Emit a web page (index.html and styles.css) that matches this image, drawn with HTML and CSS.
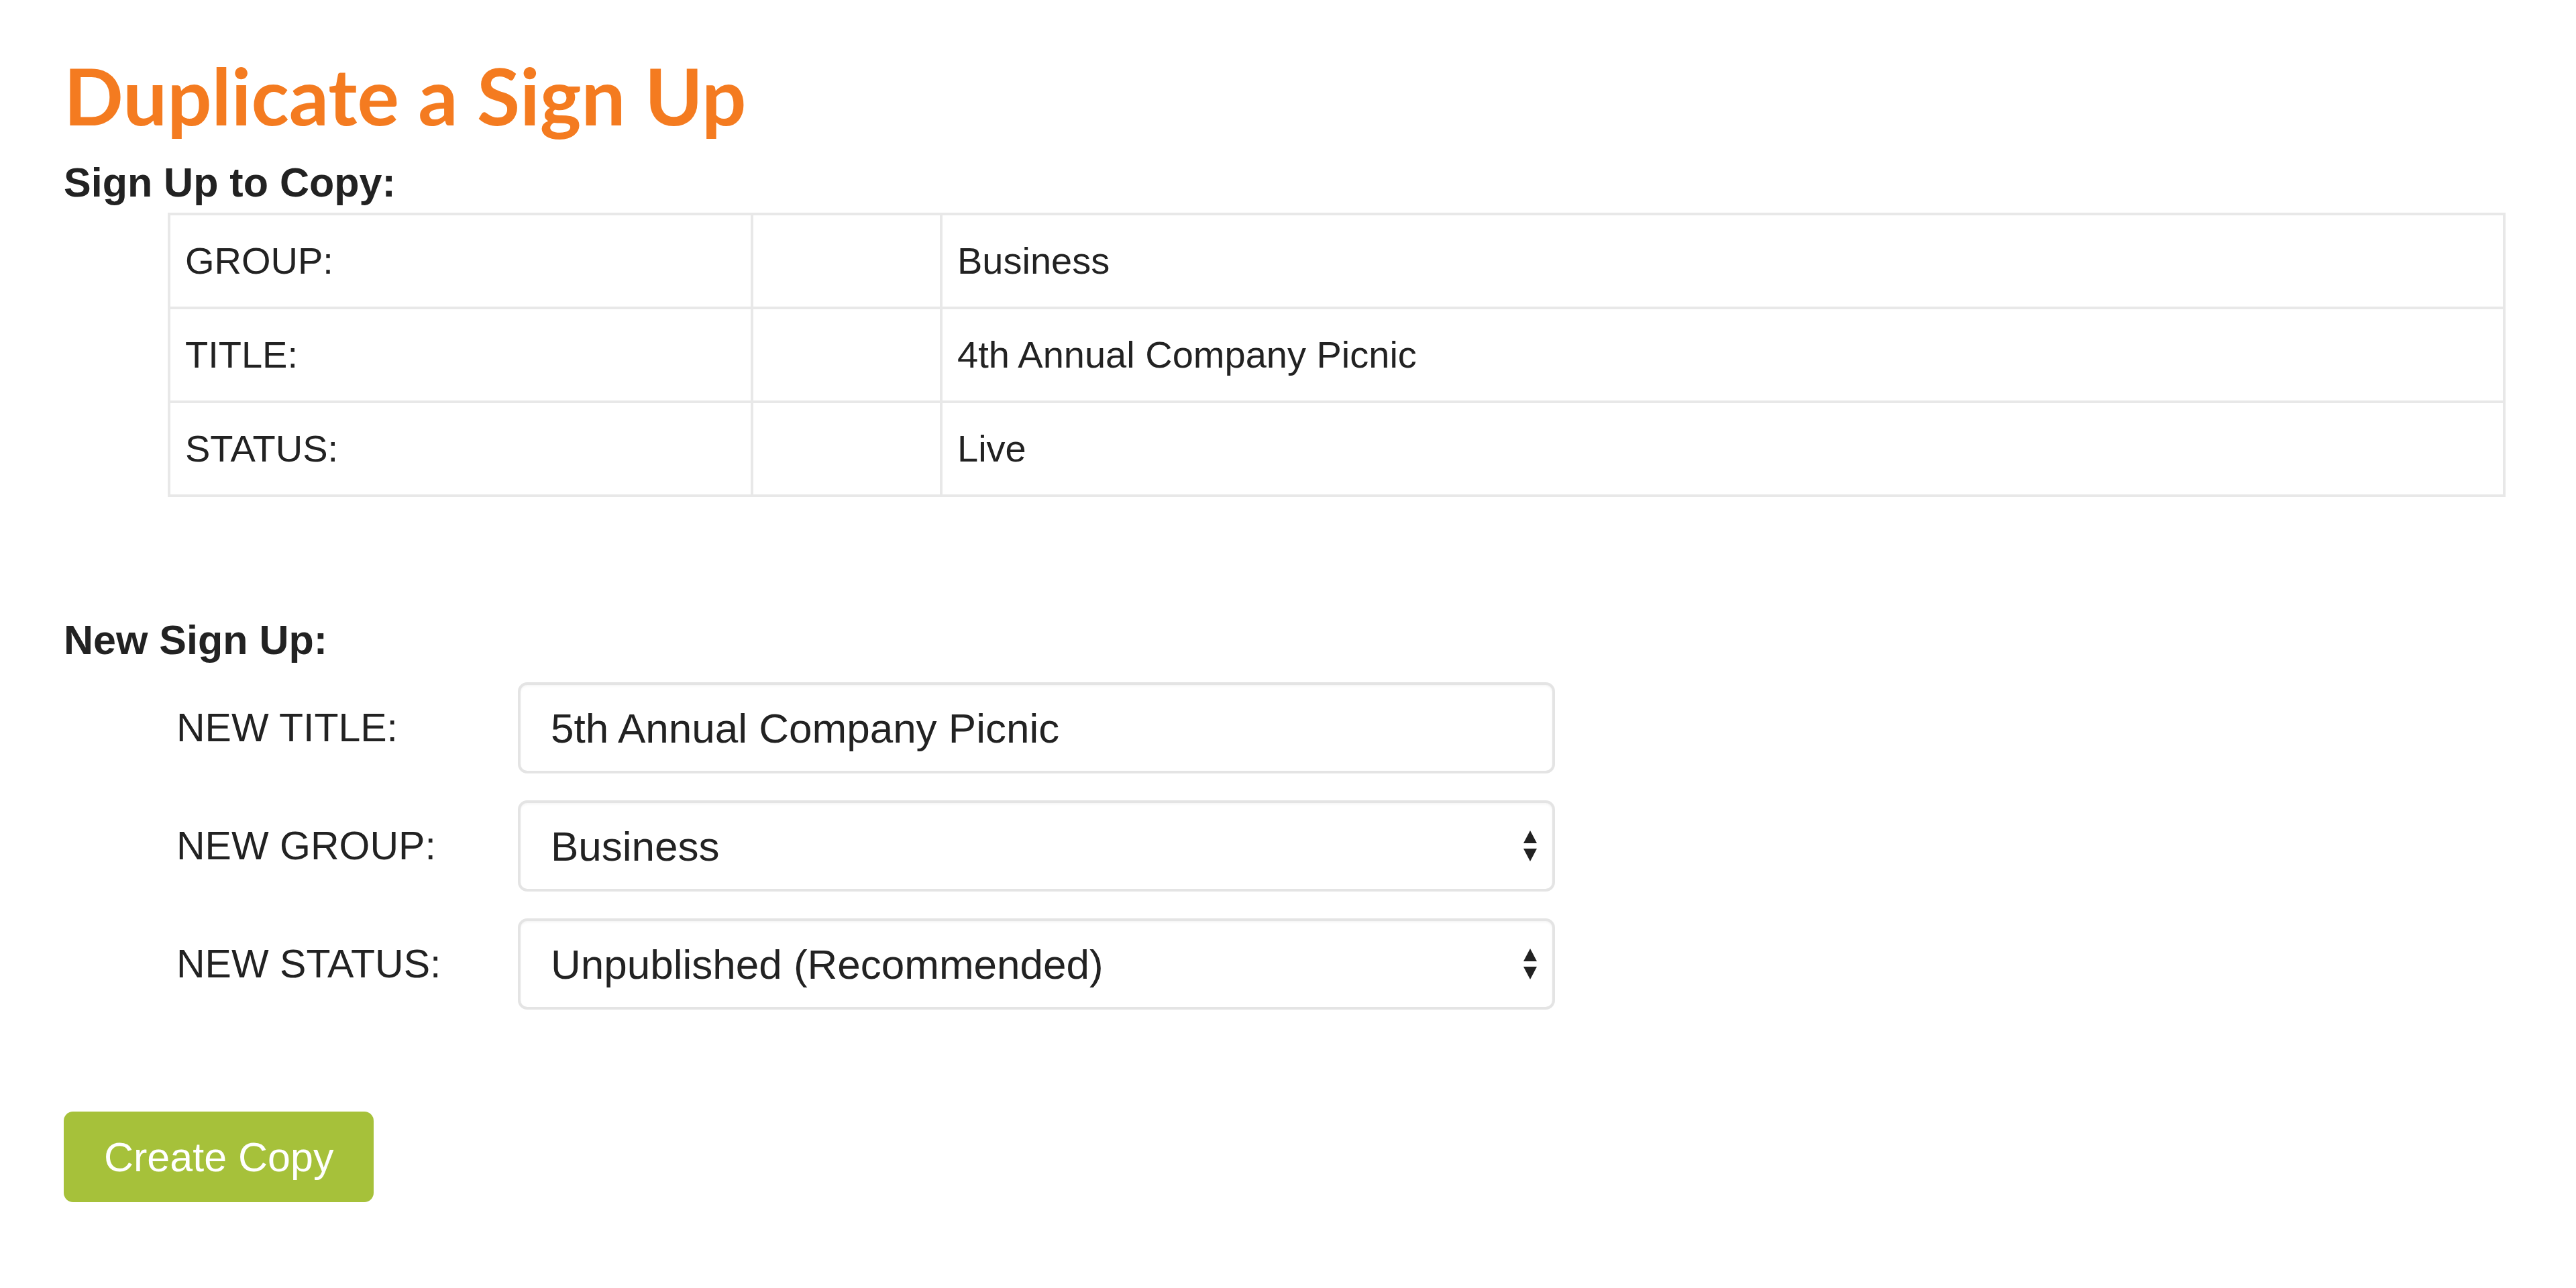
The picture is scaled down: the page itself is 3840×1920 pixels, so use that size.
FILE: index.html
```html
<!DOCTYPE html>
<html lang="en">
<head>
<meta charset="utf-8">
<title>Duplicate a Sign Up</title>
<link rel="stylesheet" href="styles.css">
</head>
<body>
<main class="page">
  <h1 class="page-title">Duplicate a Sign Up</h1>

  <h2 class="section-label">Sign Up to Copy:</h2>
  <table class="info-table">
    <tbody>
      <tr>
        <td class="col-key">GROUP:</td>
        <td class="col-gap"></td>
        <td class="col-val">Business</td>
      </tr>
      <tr>
        <td class="col-key">TITLE:</td>
        <td class="col-gap"></td>
        <td class="col-val">4th Annual Company Picnic</td>
      </tr>
      <tr>
        <td class="col-key">STATUS:</td>
        <td class="col-gap"></td>
        <td class="col-val">Live</td>
      </tr>
    </tbody>
  </table>

  <h2 class="section-label section-label--new">New Sign Up:</h2>
  <form class="new-form">
    <div class="form-row">
      <label class="form-label" for="newTitle">NEW TITLE:</label>
      <input class="form-control" id="newTitle" type="text" value="5th Annual Company Picnic">
    </div>
    <div class="form-row">
      <label class="form-label" for="newGroup">NEW GROUP:</label>
      <div class="select-wrap">
        <select class="form-control form-select" id="newGroup">
          <option>Business</option>
        </select>
        <svg class="select-arrow" viewBox="0 0 22 46" aria-hidden="true">
          <path d="M11 0 L21 19 L1 19 Z" fill="#222"/>
          <path d="M1 27 L21 27 L11 46 Z" fill="#222"/>
        </svg>
      </div>
    </div>
    <div class="form-row">
      <label class="form-label" for="newStatus">NEW STATUS:</label>
      <div class="select-wrap">
        <select class="form-control form-select" id="newStatus">
          <option>Unpublished (Recommended)</option>
        </select>
        <svg class="select-arrow" viewBox="0 0 22 46" aria-hidden="true">
          <path d="M11 0 L21 19 L1 19 Z" fill="#222"/>
          <path d="M1 27 L21 27 L11 46 Z" fill="#222"/>
        </svg>
      </div>
    </div>
  </form>

  <button class="btn-create" type="button">Create Copy</button>
</main>
</body>
</html>
```
FILE: styles.css
```css
html, body {
  margin: 0;
  padding: 0;
  background: #ffffff;
}

body {
  font-family: "Liberation Sans", Arial, Helvetica, sans-serif;
  color: #333333;
}

.page {
  padding: 70px 0 0 95px;
}

.page-title {
  margin: 0;
  font-family: Lato, "Liberation Sans", sans-serif;
  font-weight: 700;
  font-size: 117px;
  line-height: 144px;
  color: #f47b20;
}

.section-label {
  margin: 22px 0 0 0;
  font-family: "Liberation Sans", Arial, sans-serif;
  font-weight: 700;
  font-size: 61px;
  line-height: 72px;
  color: #222222;
}

.section-label--new {
  margin-top: 177px;
}

.info-table {
  margin: 9px 0 0 155px;
  width: 3485px;
  border-collapse: collapse;
  font-size: 56px;
  line-height: 76px;
  color: #222222;
}

.info-table td {
  border: 4px solid #e8e8e8;
  padding: 30px 22px;
  text-align: left;
  vertical-align: middle;
}

.col-key {
  width: 821px;
}

.col-gap {
  width: 234px;
}

.new-form {
  margin: 27px 0 0 168px;
}

.form-row {
  display: flex;
  align-items: center;
  margin-bottom: 40px;
}

.form-label {
  width: 509px;
  font-size: 59px;
  color: #222222;
}

.form-control {
  box-sizing: border-box;
  width: 1546px;
  height: 136px;
  margin: 0;
  padding: 0 45px;
  border: 4px solid #e4e4e4;
  border-radius: 14px;
  background: #ffffff;
  box-shadow: inset 0 2px 3px rgba(0, 0, 0, 0.04);
  font-family: "Liberation Sans", Arial, sans-serif;
  font-size: 62px;
  color: #222222;
  outline: none;
}

.select-wrap {
  position: relative;
  width: 1546px;
}

.form-select {
  -webkit-appearance: none;
  appearance: none;
  display: block;
}

.select-arrow {
  position: absolute;
  right: 26px;
  top: 50%;
  width: 22px;
  height: 46px;
  margin-top: -23px;
  pointer-events: none;
}

.btn-create {
  display: block;
  margin: 152px 0 0 0;
  height: 135px;
  padding: 0 60px;
  border: none;
  border-radius: 14px;
  background: #a6c13a;
  color: #ffffff;
  font-family: "Liberation Sans", Arial, sans-serif;
  font-size: 61px;
  cursor: pointer;
}
```
